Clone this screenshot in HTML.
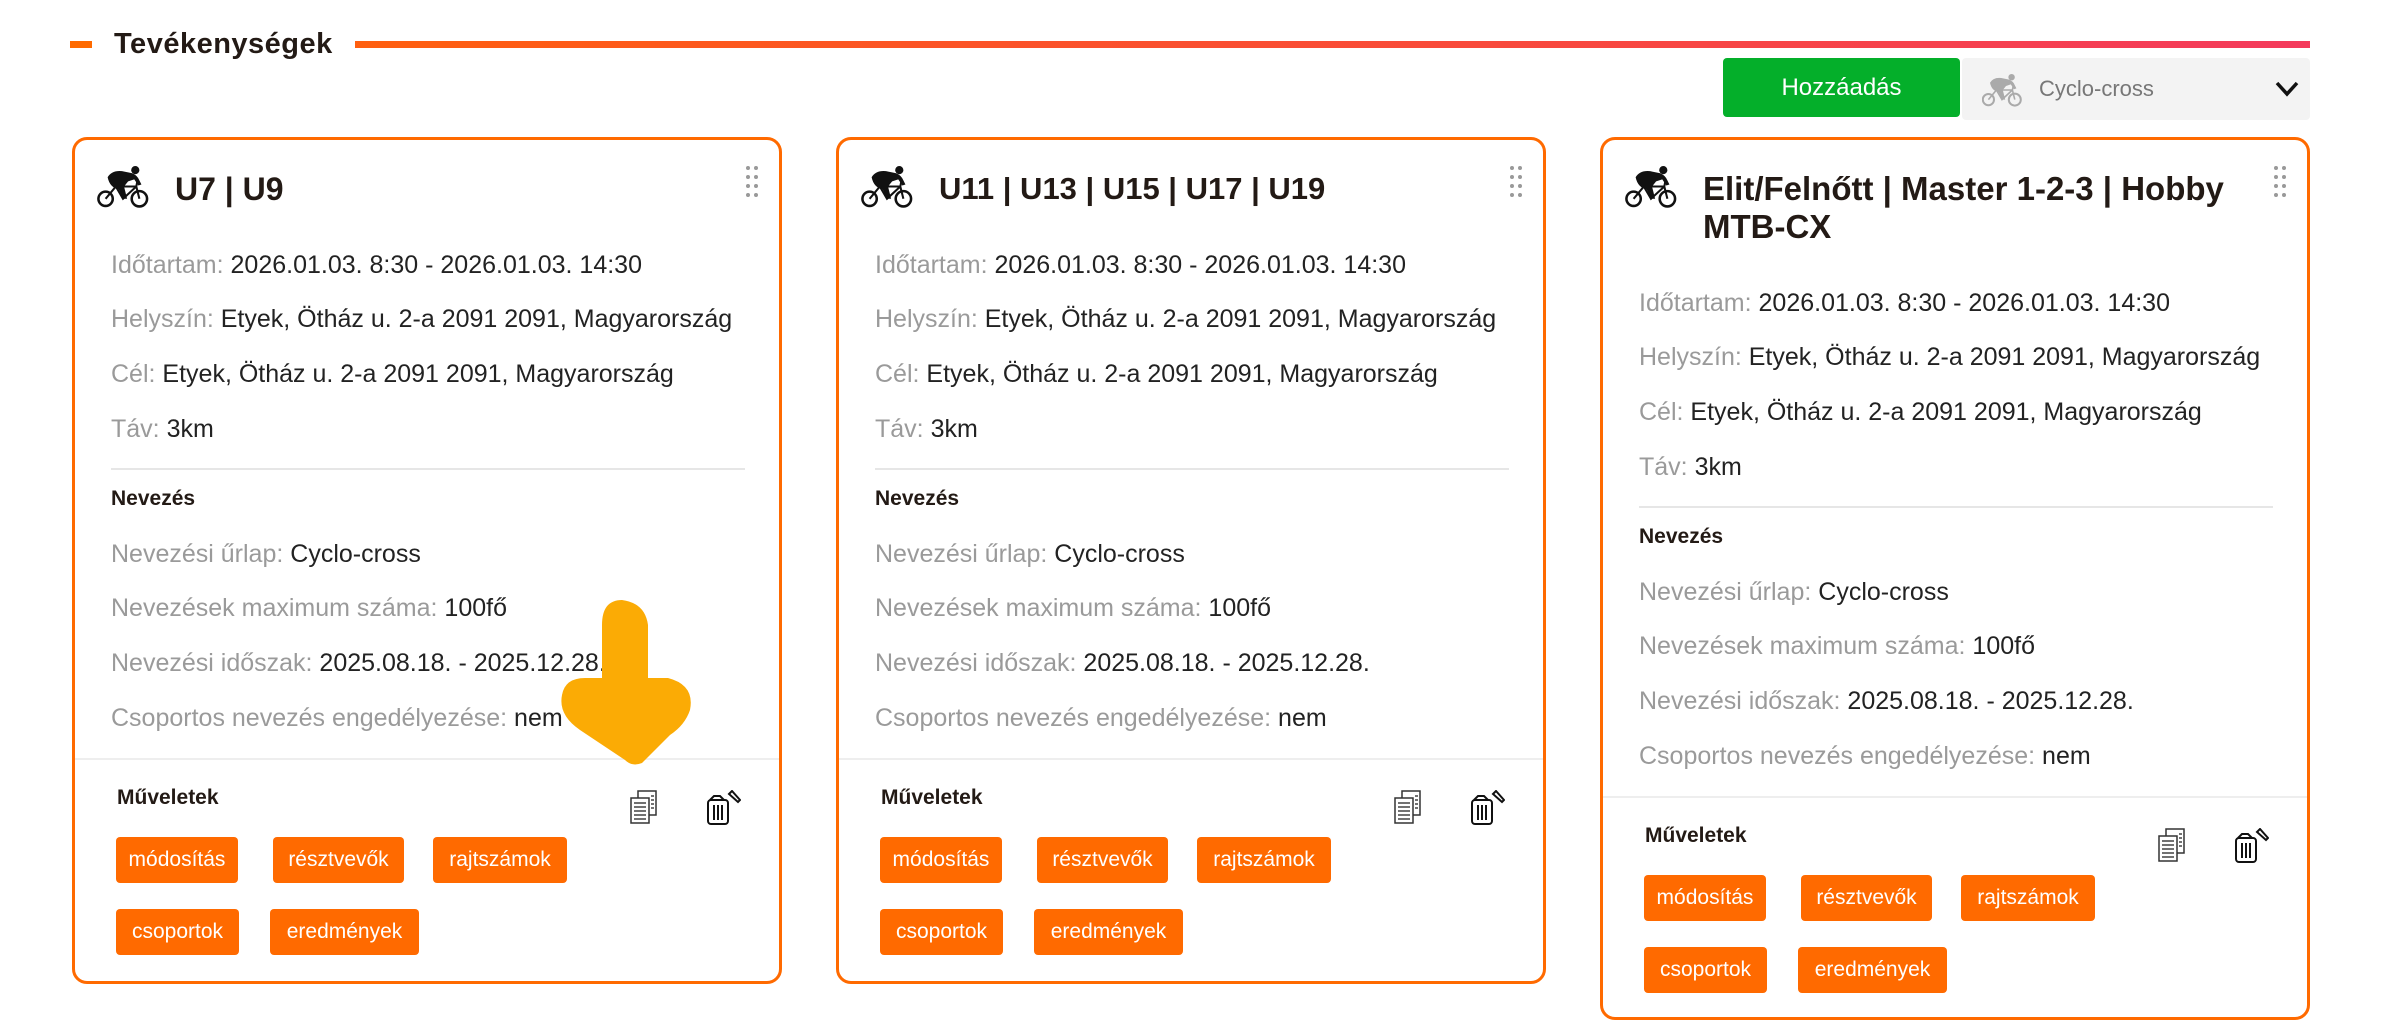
<!DOCTYPE html>
<html><head><meta charset="utf-8"><style>
*{margin:0;padding:0;box-sizing:border-box}
body{width:2391px;height:1035px;background:#fff;position:relative;overflow:hidden;font-family:"Liberation Sans",sans-serif;color:#231a15}
.a{position:absolute}
.card{position:absolute;top:137px;width:710px;border:3px solid #ff6a00;border-radius:15px;background:#fff}
.ttl{position:absolute;left:100px;font-size:32px;font-weight:700;line-height:38px;color:#231a15;width:560px}
.row{position:absolute;left:36px;font-size:25px;line-height:40px;white-space:nowrap;color:#222}
.row span{color:#9a9a9a}
.bold{position:absolute;font-size:21px;font-weight:700;line-height:40px;color:#231a15}
.sep{position:absolute;left:36px;width:634px;height:2px;background:#e6e6e6}
.sepf{position:absolute;left:0;right:0;height:2px;background:#eee}
.btn{position:absolute;height:46px;background:#ff6a00;color:#fff;border-radius:4px;font-size:21px;line-height:46px;text-align:center}
</style></head><body>
<div class="a" style="left:70px;top:41px;width:22px;height:7px;background:#ff6a00"></div>
<div class="a" style="left:114px;top:24px;font-size:29px;font-weight:700;line-height:40px;letter-spacing:0.5px">Tevékenységek</div>
<div class="a" style="left:355px;top:41px;width:1955px;height:7px;background:linear-gradient(90deg,#ff5f0f,#f43a5c)"></div>
<div class="a" style="left:1723px;top:58px;width:237px;height:59px;background:#04af2a;border-radius:4px;color:#fff;font-size:24px;line-height:59px;text-align:center">Hozzáadás</div>
<div class="a" style="left:1962px;top:58px;width:348px;height:62px;background:#f3f3f3;border-radius:4px"></div>
<svg class="a" style="left:1982px;top:73px" width="40" height="34" viewBox="0 0 50 42"><g fill="#aaa" stroke="#aaa"><circle cx="8" cy="33" r="7" fill="none" stroke-width="2.5"/><circle cx="41" cy="33" r="7.5" fill="none" stroke-width="2.5"/><circle cx="37" cy="5" r="4" stroke="none"/><path d="M8 33L18 21L38 21L41 33M18 21L25 33L38 21M38 21L39 16" fill="none" stroke-width="2"/><path d="M10 12Q14 5 24 6L34 8Q39 10 41 15L43 19L40 20L36 14L30 16L26 21L29 33L25 33L21 24Q12 22 10 12Z" stroke="none"/></g></svg>
<div class="a" style="left:2039px;top:72px;font-size:22px;line-height:34px;color:#777">Cyclo-cross</div>
<svg class="a" style="left:2274px;top:80px" width="26" height="18" viewBox="0 0 26 18"><path d="M3 3L13 14L23 3" fill="none" stroke="#111" stroke-width="3.5"/></svg>

<div class="card" style="left:72px;height:847px">
<svg class="a" style="left:22px;top:25px" width="52" height="43" viewBox="0 0 50 42"><g fill="#111" stroke="#111"><circle cx="8" cy="33" r="7" fill="none" stroke-width="2.5"/><circle cx="41" cy="33" r="7.5" fill="none" stroke-width="2.5"/><circle cx="37" cy="5" r="4" stroke="none"/><path d="M8 33L18 21L38 21L41 33M18 21L25 33L38 21M38 21L39 16" fill="none" stroke-width="2"/><path d="M10 12Q14 5 24 6L34 8Q39 10 41 15L43 19L40 20L36 14L30 16L26 21L29 33L25 33L21 24Q12 22 10 12Z" stroke="none"/></g></svg>
<div class="ttl" style="top:30px">U7 | U9</div>
<svg class="a" style="left:671px;top:25px" width="12" height="32"><g fill="#999"><circle cx="2" cy="3" r="2"/><circle cx="10" cy="3" r="2"/><circle cx="2" cy="12" r="2"/><circle cx="10" cy="12" r="2"/><circle cx="2" cy="21" r="2"/><circle cx="10" cy="21" r="2"/><circle cx="2" cy="30" r="2"/><circle cx="10" cy="30" r="2"/></g></svg>
<div class="row" style="top:105px"><span>Időtartam:</span> 2026.01.03. 8:30 - 2026.01.03. 14:30</div>
<div class="row" style="top:159px"><span>Helyszín:</span> Etyek, Ötház u. 2-a 2091 2091, Magyarország</div>
<div class="row" style="top:214px"><span>Cél:</span> Etyek, Ötház u. 2-a 2091 2091, Magyarország</div>
<div class="row" style="top:269px"><span>Táv:</span> 3km</div>
<div class="sep" style="top:328px"></div>
<div class="bold" style="left:36px;top:339px">Nevezés</div>
<div class="row" style="top:394px"><span>Nevezési űrlap:</span> Cyclo-cross</div>
<div class="row" style="top:448px"><span>Nevezések maximum száma:</span> 100fő</div>
<div class="row" style="top:503px"><span>Nevezési időszak:</span> 2025.08.18. - 2025.12.28.</div>
<div class="row" style="top:558px"><span>Csoportos nevezés engedélyezése:</span> nem</div>
<div class="sepf" style="top:618px"></div>
<div class="bold" style="left:42px;top:638px">Műveletek</div>
<svg class="a" style="left:554px;top:650px" width="30" height="34" viewBox="0 0 30 34"><g fill="#fff" stroke="#333" stroke-width="1.5"><rect x="9" y="1" width="18" height="24"/><rect x="2" y="8" width="18" height="25"/></g><g stroke="#444" stroke-width="1.5"><path d="M5 13h12M5 17h12M5 21h12M5 25h12M5 29h12M22 6h3M22 10h3M22 14h3M22 18h3"/></g></svg>
<svg class="a" style="left:630px;top:650px" width="36" height="36" viewBox="0 0 36 36"><g fill="none" stroke="#111" stroke-width="2"><rect x="3" y="10" width="20" height="24" rx="3"/><path d="M9 15v15M13 15v15M17 15v15"/><path d="M5 10l4-4h6l4 4"/><path d="M24 4l3-3 8 9-2 2z"/></g></svg>
<div class="btn" style="left:41px;top:697px;width:122px">módosítás</div>
<div class="btn" style="left:198px;top:697px;width:131px">résztvevők</div>
<div class="btn" style="left:358px;top:697px;width:134px">rajtszámok</div>
<div class="btn" style="left:41px;top:769px;width:123px">csoportok</div>
<div class="btn" style="left:195px;top:769px;width:149px">eredmények</div>
</div>

<div class="card" style="left:836px;height:847px">
<svg class="a" style="left:22px;top:25px" width="52" height="43" viewBox="0 0 50 42"><g fill="#111" stroke="#111"><circle cx="8" cy="33" r="7" fill="none" stroke-width="2.5"/><circle cx="41" cy="33" r="7.5" fill="none" stroke-width="2.5"/><circle cx="37" cy="5" r="4" stroke="none"/><path d="M8 33L18 21L38 21L41 33M18 21L25 33L38 21M38 21L39 16" fill="none" stroke-width="2"/><path d="M10 12Q14 5 24 6L34 8Q39 10 41 15L43 19L40 20L36 14L30 16L26 21L29 33L25 33L21 24Q12 22 10 12Z" stroke="none"/></g></svg>
<div class="ttl" style="top:30px;font-size:31px">U11 | U13 | U15 | U17 | U19</div>
<svg class="a" style="left:671px;top:25px" width="12" height="32"><g fill="#999"><circle cx="2" cy="3" r="2"/><circle cx="10" cy="3" r="2"/><circle cx="2" cy="12" r="2"/><circle cx="10" cy="12" r="2"/><circle cx="2" cy="21" r="2"/><circle cx="10" cy="21" r="2"/><circle cx="2" cy="30" r="2"/><circle cx="10" cy="30" r="2"/></g></svg>
<div class="row" style="top:105px"><span>Időtartam:</span> 2026.01.03. 8:30 - 2026.01.03. 14:30</div>
<div class="row" style="top:159px"><span>Helyszín:</span> Etyek, Ötház u. 2-a 2091 2091, Magyarország</div>
<div class="row" style="top:214px"><span>Cél:</span> Etyek, Ötház u. 2-a 2091 2091, Magyarország</div>
<div class="row" style="top:269px"><span>Táv:</span> 3km</div>
<div class="sep" style="top:328px"></div>
<div class="bold" style="left:36px;top:339px">Nevezés</div>
<div class="row" style="top:394px"><span>Nevezési űrlap:</span> Cyclo-cross</div>
<div class="row" style="top:448px"><span>Nevezések maximum száma:</span> 100fő</div>
<div class="row" style="top:503px"><span>Nevezési időszak:</span> 2025.08.18. - 2025.12.28.</div>
<div class="row" style="top:558px"><span>Csoportos nevezés engedélyezése:</span> nem</div>
<div class="sepf" style="top:618px"></div>
<div class="bold" style="left:42px;top:638px">Műveletek</div>
<svg class="a" style="left:554px;top:650px" width="30" height="34" viewBox="0 0 30 34"><g fill="#fff" stroke="#333" stroke-width="1.5"><rect x="9" y="1" width="18" height="24"/><rect x="2" y="8" width="18" height="25"/></g><g stroke="#444" stroke-width="1.5"><path d="M5 13h12M5 17h12M5 21h12M5 25h12M5 29h12M22 6h3M22 10h3M22 14h3M22 18h3"/></g></svg>
<svg class="a" style="left:630px;top:650px" width="36" height="36" viewBox="0 0 36 36"><g fill="none" stroke="#111" stroke-width="2"><rect x="3" y="10" width="20" height="24" rx="3"/><path d="M9 15v15M13 15v15M17 15v15"/><path d="M5 10l4-4h6l4 4"/><path d="M24 4l3-3 8 9-2 2z"/></g></svg>
<div class="btn" style="left:41px;top:697px;width:122px">módosítás</div>
<div class="btn" style="left:198px;top:697px;width:131px">résztvevők</div>
<div class="btn" style="left:358px;top:697px;width:134px">rajtszámok</div>
<div class="btn" style="left:41px;top:769px;width:123px">csoportok</div>
<div class="btn" style="left:195px;top:769px;width:149px">eredmények</div>
</div>

<div class="card" style="left:1600px;height:883px">
<svg class="a" style="left:22px;top:25px" width="52" height="43" viewBox="0 0 50 42"><g fill="#111" stroke="#111"><circle cx="8" cy="33" r="7" fill="none" stroke-width="2.5"/><circle cx="41" cy="33" r="7.5" fill="none" stroke-width="2.5"/><circle cx="37" cy="5" r="4" stroke="none"/><path d="M8 33L18 21L38 21L41 33M18 21L25 33L38 21M38 21L39 16" fill="none" stroke-width="2"/><path d="M10 12Q14 5 24 6L34 8Q39 10 41 15L43 19L40 20L36 14L30 16L26 21L29 33L25 33L21 24Q12 22 10 12Z" stroke="none"/></g></svg>
<div class="ttl" style="top:30px;font-size:33px">Elit/Felnőtt | Master 1-2-3 | Hobby MTB-CX</div>
<svg class="a" style="left:671px;top:25px" width="12" height="32"><g fill="#999"><circle cx="2" cy="3" r="2"/><circle cx="10" cy="3" r="2"/><circle cx="2" cy="12" r="2"/><circle cx="10" cy="12" r="2"/><circle cx="2" cy="21" r="2"/><circle cx="10" cy="21" r="2"/><circle cx="2" cy="30" r="2"/><circle cx="10" cy="30" r="2"/></g></svg>
<div class="row" style="top:143px"><span>Időtartam:</span> 2026.01.03. 8:30 - 2026.01.03. 14:30</div>
<div class="row" style="top:197px"><span>Helyszín:</span> Etyek, Ötház u. 2-a 2091 2091, Magyarország</div>
<div class="row" style="top:252px"><span>Cél:</span> Etyek, Ötház u. 2-a 2091 2091, Magyarország</div>
<div class="row" style="top:307px"><span>Táv:</span> 3km</div>
<div class="sep" style="top:366px"></div>
<div class="bold" style="left:36px;top:377px">Nevezés</div>
<div class="row" style="top:432px"><span>Nevezési űrlap:</span> Cyclo-cross</div>
<div class="row" style="top:486px"><span>Nevezések maximum száma:</span> 100fő</div>
<div class="row" style="top:541px"><span>Nevezési időszak:</span> 2025.08.18. - 2025.12.28.</div>
<div class="row" style="top:596px"><span>Csoportos nevezés engedélyezése:</span> nem</div>
<div class="sepf" style="top:656px"></div>
<div class="bold" style="left:42px;top:676px">Műveletek</div>
<svg class="a" style="left:554px;top:688px" width="30" height="34" viewBox="0 0 30 34"><g fill="#fff" stroke="#333" stroke-width="1.5"><rect x="9" y="1" width="18" height="24"/><rect x="2" y="8" width="18" height="25"/></g><g stroke="#444" stroke-width="1.5"><path d="M5 13h12M5 17h12M5 21h12M5 25h12M5 29h12M22 6h3M22 10h3M22 14h3M22 18h3"/></g></svg>
<svg class="a" style="left:630px;top:688px" width="36" height="36" viewBox="0 0 36 36"><g fill="none" stroke="#111" stroke-width="2"><rect x="3" y="10" width="20" height="24" rx="3"/><path d="M9 15v15M13 15v15M17 15v15"/><path d="M5 10l4-4h6l4 4"/><path d="M24 4l3-3 8 9-2 2z"/></g></svg>
<div class="btn" style="left:41px;top:735px;width:122px">módosítás</div>
<div class="btn" style="left:198px;top:735px;width:131px">résztvevők</div>
<div class="btn" style="left:358px;top:735px;width:134px">rajtszámok</div>
<div class="btn" style="left:41px;top:807px;width:123px">csoportok</div>
<div class="btn" style="left:195px;top:807px;width:149px">eredmények</div>
</div>

<svg class="a" style="left:550px;top:595px" width="150" height="170" viewBox="0 0 150 170"><path d="M52 30Q52 5 72 5Q95 8 98 30L98 83L118 83Q145 90 140 115Q135 130 120 140L92 168Q82 172 75 165L30 135Q8 120 12 100Q15 83 35 83L52 83Z" fill="#fbab05"/></svg>
</body></html>
